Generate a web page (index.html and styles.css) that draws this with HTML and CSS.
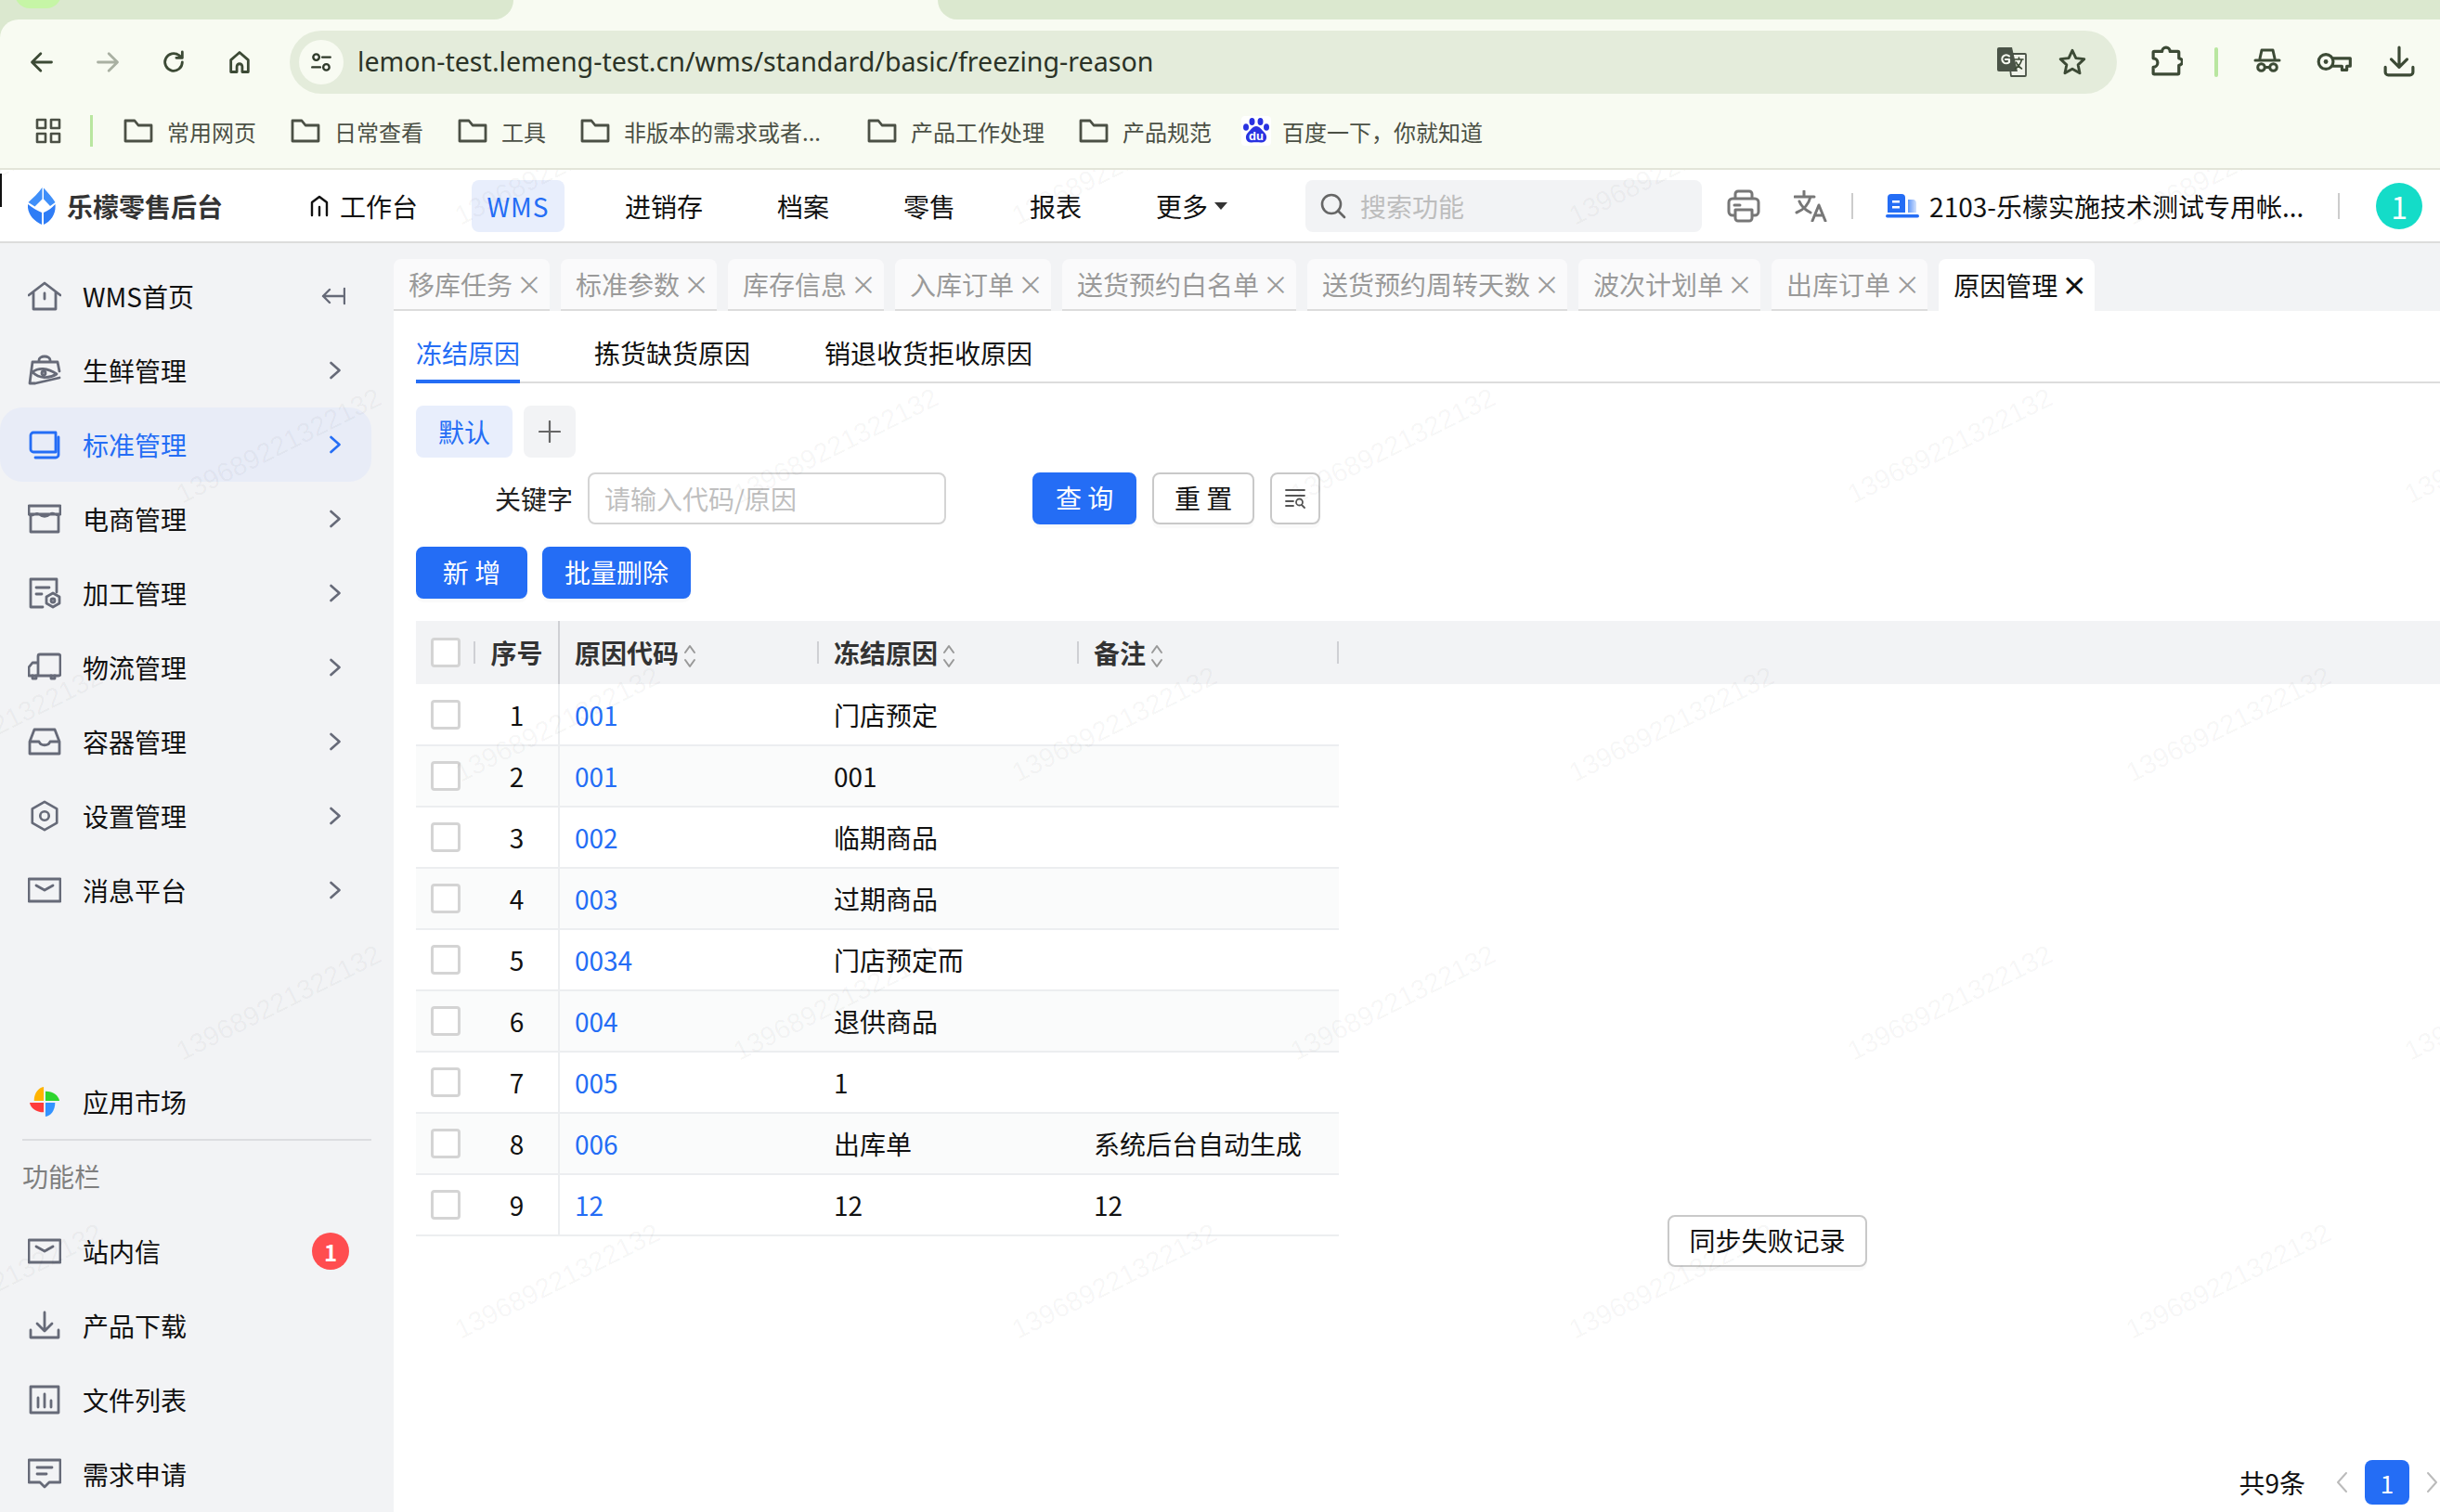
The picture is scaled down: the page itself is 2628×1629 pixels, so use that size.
FILE: index.html
```html
<!DOCTYPE html>
<html lang="zh">
<head>
    <meta charset="UTF-8">
    <title>原因管理</title>
    <link rel="stylesheet" href="styles.css">
</head>
<body>

<!-- 浏览器外壳 -->
<div class="tab-strip">
    <div class="chrome-tab left"><span class="tab-fav"></span></div>
    <div class="chrome-tab right"></div>
</div>
<div class="toolbar-back">
<div class="toolbar">
    <svg class="tb-icon" viewBox="0 0 24 24"><path d="M21 12H4M11 4l-8 8 8 8"/></svg>
    <svg class="tb-icon off" viewBox="0 0 24 24"><path d="M3 12h17M13 4l8 8-8 8"/></svg>
    <svg class="tb-icon" viewBox="0 0 24 24"><path d="M20 12a8 8 0 1 1-3-6.300L20 8M20 2.500V8h-5.500"/></svg>
    <svg class="tb-icon" viewBox="0 0 24 24"><path d="M4 21V10l8-7 8 7v11h-5.500v-5a2.500 2.500 0 0 0-5 0v5z"/></svg>
    <div class="address">
        <span class="site-info">
            <svg viewBox="0 0 24 24"><circle cx="7" cy="7" r="3"/><path d="M13 7h8M3 17h8"/><circle cx="17" cy="17" r="3"/></svg>
        </span>
        <span class="url">lemon-test.lemeng-test.cn/wms/standard/basic/freezing-reason</span>
        <svg class="addr-icon trans" viewBox="0 0 32 32"><path class="white" d="M12 7h18a1 1 0 0 1 1 1v22a1 1 0 0 1-1 1H15z"/><path class="solid" d="M2 0h14l6 26H2a2 2 0 0 1-2-2V2a2 2 0 0 1 2-2z"/><path class="g" d="M13 9.500a4.500 4.500 0 1 0 0 6.500v-3h-4"/><path class="thin" d="M19 13h9M23.500 11v2M26.500 13c-1 5-4 8-7 10M20.500 16c1 3 3.500 5.500 6 7"/></svg>
        <svg class="addr-icon star" viewBox="0 0 24 24"><path d="M12 2.500l2.900 6.200 6.700.8-5 4.600 1.400 6.700L12 17.400l-6 3.400 1.400-6.700-5-4.600 6.700-.8z"/></svg>
    </div>
    <svg class="tb-icon ext" viewBox="0 0 32 32"><path d="M2 7a1 1 0 0 1 1-1h8a4 4 0 0 1 8 0h8a1 1 0 0 1 1 1v6a3.500 3.500 0 0 1 0 7v8a1 1 0 0 1-1 1H3a1 1 0 0 1-1-1v-6a4.500 4.500 0 0 0 0-9z"/></svg>
    <span class="tb-sep"></span>
    <svg class="tb-icon hat" viewBox="0 0 30 26"><path d="M2 13h26M7 11l2-9h12l2 9"/><circle cx="8.500" cy="20.500" r="3.800"/><circle cx="21.500" cy="20.500" r="3.800"/><path d="M12.500 20.500h5"/></svg>
    <svg class="tb-icon key" viewBox="0 0 36 20"><circle cx="9.500" cy="10" r="7.500"/><circle class="dot" cx="9.500" cy="10" r="2.300"/><path d="M17 6.500h17.500v8h-3.500v4h-5v-4h-9"/></svg>
    <svg class="tb-icon dl" viewBox="0 0 32 32"><path d="M16 2v20M8 14l8 8 8-8M2 22v5a3 3 0 0 0 3 3h22a3 3 0 0 0 3-3v-5"/></svg>
</div>
</div>
<div class="bookmarks">
    <svg class="apps" viewBox="0 0 28 28"><path d="M2 2h9v9H2zM17 2h9v9h-9zM2 17h9v9H2zM17 17h9v9h-9z"/></svg>
    <span class="bm-sep"></span>
    <a class="bm"><svg viewBox="0 0 32 28"><path d="M2 25V3h10l4 5h14v17z"/></svg>常用网页</a>
    <a class="bm"><svg viewBox="0 0 32 28"><path d="M2 25V3h10l4 5h14v17z"/></svg>日常查看</a>
    <a class="bm"><svg viewBox="0 0 32 28"><path d="M2 25V3h10l4 5h14v17z"/></svg>工具</a>
    <a class="bm wide"><svg viewBox="0 0 32 28"><path d="M2 25V3h10l4 5h14v17z"/></svg>非版本的需求或者...</a>
    <a class="bm"><svg viewBox="0 0 32 28"><path d="M2 25V3h10l4 5h14v17z"/></svg>产品工作处理</a>
    <a class="bm"><svg viewBox="0 0 32 28"><path d="M2 25V3h10l4 5h14v17z"/></svg>产品规范</a>
    <a class="bm baidu">
        <svg viewBox="0 0 32 32"><rect width="32" height="32" rx="4" fill="#fff" stroke="none"/><g fill="#2932e1" stroke="none"><ellipse cx="5" cy="12" rx="3" ry="3.800"/><ellipse cx="11.500" cy="6" rx="3" ry="4"/><ellipse cx="20.500" cy="6" rx="3" ry="4"/><ellipse cx="27" cy="12" rx="3" ry="3.800"/><path d="M16 11c4 0 6 4 9 7 4 4 2 11-4 10.500-3-.3-7-.3-10 0C5 29 3 22 7 18c3-3 5-7 9-7z"/></g><text x="16" y="26" text-anchor="middle" fill="#fff" stroke="none" font-family="Liberation Sans" font-size="13" font-weight="700">du</text></svg>
        百度一下，你就知道
    </a>
</div>

<!-- 系统顶栏 -->
<div class="navbar">
    <span class="cursor-mark"></span>
    <div class="logo">
        <svg viewBox="10 8 30 40">
            <path fill="#3f8ff9" d="M25.500 8c-4 6-10 11-15 16l7 4.500 8-8zM27 8.500v12l7 7.500 5.500-4c-3.500-6-8.500-11-12.500-15.500z"/>
            <path fill="#2f7df6" d="M10 26c-1 10 6 18 15 22V35c-5-2-10-5-15-9zM39.500 26c1 10-4 18-12.500 22V35c5-2 9-5 12.500-9z"/>
        </svg>
        <span>乐檬零售后台</span>
    </div>
    <a class="nav-item home">
        <svg viewBox="0 0 20 24"><path d="M2 22V8l8-6 8 6v14M10 22v-9"/></svg>工作台
    </a>
    <a class="nav-item on">WMS</a>
    <a class="nav-item">进销存</a>
    <a class="nav-item">档案</a>
    <a class="nav-item">零售</a>
    <a class="nav-item">报表</a>
    <a class="nav-item more">更多<i class="caret"></i></a>
    <div class="nav-search">
        <svg viewBox="0 0 28 28"><circle cx="12" cy="12" r="10"/><path d="M19 19l7 7"/></svg>
        <span>搜索功能</span>
    </div>
    <svg class="nav-icon printer" viewBox="0 0 36 36"><path d="M9 10V5a3 3 0 0 1 3-3h12a3 3 0 0 1 3 3v5M9 28H6a4 4 0 0 1-4-4V14a4 4 0 0 1 4-4h24a4 4 0 0 1 4 4v10a4 4 0 0 1-4 4h-3M9 22h18v9a3 3 0 0 1-3 3H12a3 3 0 0 1-3-3z"/><path d="M8 17h6"/></svg>
    <svg class="nav-icon lang" viewBox="0 0 36 34"><path d="M1 7h21M11 1v6M18 7c-2 8-7 14-15 17M6 12c2 5 6 9 12 12"/><path d="M20 33l7-17 7 17M23 27h8"/></svg>
    <span class="nav-sep"></span>
    <svg class="org-icon" viewBox="0 0 36 27">
        <defs><linearGradient id="org-fade" x1="0" x2="1" y1="0" y2="0"><stop offset="0" stop-color="#5f97f8"/><stop offset="1" stop-color="#d3e2fd"/></linearGradient></defs>
        <path fill="#246df5" d="M2 21V5a4 4 0 0 1 4-4h11a4 4 0 0 1 4 4v16z"/>
        <path fill="url(#org-fade)" d="M24 7h6a4 4 0 0 1 3 4v10h-9z"/>
        <rect fill="#246df5" x="0" y="23" width="36" height="3.500" rx="1.700"/>
        <path fill="#fff" d="M7 8h8v2.500H7zM7 14h8v2.500H7z"/>
    </svg>
    <span class="org-name">2103-乐檬实施技术测试专用帐...</span>
    <span class="nav-sep"></span>
    <span class="avatar">1</span>
</div>

<div class="main">
    <!-- 侧边栏 -->
    <div class="sidebar">
        <a class="side-item">
            <svg viewBox="0 0 36 32"><path d="M1 15L18 2l17 13M6 12v18h24V12M18 13v6"/></svg>
            <span>WMS首页</span>
            <svg class="collapse" viewBox="0 0 26 20"><path d="M25 2v16M23 10H2M9 3l-7 7 7 7"/></svg>
        </a>
        <a class="side-item">
            <svg viewBox="0 0 36 32"><path d="M12 7V5a6 4 0 0 1 12 0v2M5 7h27l2 10M2 30l3-23M2 30h6l26-6M5 18c6-5 16-5 26 2-8 5-19 5-26-2z"/><circle cx="17" cy="19" r="2"/></svg>
            <span>生鲜管理</span>
            <svg class="chev" viewBox="0 0 12 20"><path d="M1.500 2l9 8-9 8"/></svg>
        </a>
        <a class="side-item on">
            <svg viewBox="0 0 36 32"><path d="M6 3h24v21H6a3 3 0 0 1-3-3V6a3 3 0 0 1 3-3zM33 8v19a3 3 0 0 1-3 3H8"/></svg>
            <span>标准管理</span>
            <svg class="chev" viewBox="0 0 12 20"><path d="M1.500 2l9 8-9 8"/></svg>
        </a>
        <a class="side-item">
            <svg viewBox="0 0 36 32"><path d="M1 2h34v9H1zM3 11v19h30V11M1 11c4 4 7-3 11 0s8 3 12 0 7 3 11 0"/></svg>
            <span>电商管理</span>
            <svg class="chev" viewBox="0 0 12 20"><path d="M1.500 2l9 8-9 8"/></svg>
        </a>
        <a class="side-item">
            <svg viewBox="0 0 36 34"><path d="M16 32H3V2h28v14M9 11h14M9 18h6"/><path d="M27 17l7 4v7l-7 4-7-4v-7z"/><circle cx="27" cy="25" r="2"/></svg>
            <span>加工管理</span>
            <svg class="chev" viewBox="0 0 12 20"><path d="M1.500 2l9 8-9 8"/></svg>
        </a>
        <a class="side-item">
            <svg viewBox="0 0 36 30"><path d="M11 24h22a2 2 0 0 0 2-2V3a2 2 0 0 0-2-2H13a2 2 0 0 0-2 2v21zM11 10H5l-4 5v9h10"/><path d="M5 24v3h4v-3M25 24v3h4v-3"/></svg>
            <span>物流管理</span>
            <svg class="chev" viewBox="0 0 12 20"><path d="M1.500 2l9 8-9 8"/></svg>
        </a>
        <a class="side-item">
            <svg viewBox="0 0 36 30"><path d="M2 15L7 2h22l5 13v13H2zM2 15h10c2 5 10 5 12 0h10"/></svg>
            <span>容器管理</span>
            <svg class="chev" viewBox="0 0 12 20"><path d="M1.500 2l9 8-9 8"/></svg>
        </a>
        <a class="side-item">
            <svg viewBox="0 0 36 36"><path d="M18 2l14 8v16l-14 8-14-8V10z"/><circle cx="18" cy="18" r="5"/></svg>
            <span>设置管理</span>
            <svg class="chev" viewBox="0 0 12 20"><path d="M1.500 2l9 8-9 8"/></svg>
        </a>
        <a class="side-item">
            <svg viewBox="0 0 36 30"><path d="M1 3h34v24H1zM9 10l9 5 9-5"/></svg>
            <span>消息平台</span>
            <svg class="chev" viewBox="0 0 12 20"><path d="M1.500 2l9 8-9 8"/></svg>
        </a>

        <a class="side-item market">
            <svg viewBox="0 0 36 36"><path fill="#ffb400" stroke="none" d="M17 17H6c0-9 5-15 11-16z"/><path fill="#2ed52e" stroke="none" d="M19 17V6c9 0 15 5 16 11z"/><path fill="#3393ff" stroke="none" d="M19 19h11c0 9-5 15-11 16z"/><path fill="#ff3b3b" stroke="none" d="M17 19v11C8 30 2 25 1 19z"/></svg>
            <span>应用市场</span>
        </a>
        <div class="side-title">功能栏</div>
        <a class="side-item">
            <svg viewBox="0 0 36 30"><path d="M1 3h34v24H1zM9 10l9 5 9-5"/></svg>
            <span>站内信</span>
            <b class="badge">1</b>
        </a>
        <a class="side-item">
            <svg viewBox="0 0 36 30"><path d="M18 1v19M10 13l8 8 8-8M3 20v8h30v-8"/></svg>
            <span>产品下载</span>
        </a>
        <a class="side-item">
            <svg viewBox="0 0 36 32"><path d="M3 2h30v28H3zM11 14v10M18 10v14M25 17v7"/></svg>
            <span>文件列表</span>
        </a>
        <a class="side-item">
            <svg viewBox="0 0 36 34"><path d="M1 2h34v24H23l-5 5-5-5H1zM10 10h16M10 17h10"/></svg>
            <span>需求申请</span>
        </a>
    </div>

    <!-- 内容区 -->
    <div class="content">
        <div class="page-tabs">
            <a class="page-tab">移库任务<i>×</i></a>
            <a class="page-tab">标准参数<i>×</i></a>
            <a class="page-tab">库存信息<i>×</i></a>
            <a class="page-tab">入库订单<i>×</i></a>
            <a class="page-tab">送货预约白名单<i>×</i></a>
            <a class="page-tab">送货预约周转天数<i>×</i></a>
            <a class="page-tab">波次计划单<i>×</i></a>
            <a class="page-tab">出库订单<i>×</i></a>
            <a class="page-tab on">原因管理<i>×</i></a>
        </div>

        <div class="panel">
            <div class="sub-tabs">
                <a class="sub-tab on">冻结原因</a>
                <a class="sub-tab">拣货缺货原因</a>
                <a class="sub-tab">销退收货拒收原因</a>
            </div>

            <div class="tag-row">
                <span class="tag on">默认</span>
                <span class="tag add"><svg viewBox="0 0 24 24"><path d="M12 1v22M1 12h22"/></svg></span>
            </div>

            <div class="search-row">
                <label>关键字</label>
                <input class="kw" type="text" placeholder="请输入代码/原因">
                <button class="btn primary first">查 询</button>
                <button class="btn">重 置</button>
                <button class="btn icon-btn">
                    <svg viewBox="0 0 24 24"><path d="M2 4h20M2 10h20M2 16h8M2 21h8"/><circle cx="16.500" cy="17" r="3.500"/><path d="M19 20l3 3"/></svg>
                </button>
            </div>

            <div class="action-row">
                <button class="btn primary add-btn">新 增</button>
                <button class="btn primary del-btn">批量删除</button>
            </div>

            <table class="grid">
                <colgroup>
                    <col class="c-check"><col class="c-no"><col class="c-col"><col class="c-col"><col class="c-col"><col>
                </colgroup>
                <thead>
                    <tr>
                        <th class="sep"><span class="cb"></span></th>
                        <th class="fix">序号</th>
                        <th class="sep">原因代码<svg class="sort" viewBox="0 0 14 26"><path d="M2 9l5-7 5 7M2 17l5 7 5-7"/></svg></th>
                        <th class="sep">冻结原因<svg class="sort" viewBox="0 0 14 26"><path d="M2 9l5-7 5 7M2 17l5 7 5-7"/></svg></th>
                        <th class="sep">备注<svg class="sort" viewBox="0 0 14 26"><path d="M2 9l5-7 5 7M2 17l5 7 5-7"/></svg></th>
                        <th></th>
                    </tr>
                </thead>
                <tbody>
                    <tr><td><span class="cb"></span></td><td class="fix num">1</td><td class="code">001</td><td>门店预定</td><td></td><td class="rest"></td></tr>
                    <tr><td><span class="cb"></span></td><td class="fix num">2</td><td class="code">001</td><td>001</td><td></td><td class="rest"></td></tr>
                    <tr><td><span class="cb"></span></td><td class="fix num">3</td><td class="code">002</td><td>临期商品</td><td></td><td class="rest"></td></tr>
                    <tr><td><span class="cb"></span></td><td class="fix num">4</td><td class="code">003</td><td>过期商品</td><td></td><td class="rest"></td></tr>
                    <tr><td><span class="cb"></span></td><td class="fix num">5</td><td class="code">0034</td><td>门店预定而</td><td></td><td class="rest"></td></tr>
                    <tr><td><span class="cb"></span></td><td class="fix num">6</td><td class="code">004</td><td>退供商品</td><td></td><td class="rest"></td></tr>
                    <tr><td><span class="cb"></span></td><td class="fix num">7</td><td class="code">005</td><td>1</td><td></td><td class="rest"></td></tr>
                    <tr><td><span class="cb"></span></td><td class="fix num">8</td><td class="code">006</td><td>出库单</td><td>系统后台自动生成</td><td class="rest"></td></tr>
                    <tr><td><span class="cb"></span></td><td class="fix num">9</td><td class="code">12</td><td>12</td><td>12</td><td class="rest"></td></tr>
                </tbody>
            </table>

            <div class="pager">
                <span class="total">共9条</span>
                <svg class="pg-arrow" viewBox="0 0 14 24"><path d="M12 2L3 12l9 10"/></svg>
                <span class="pg-num">1</span>
                <svg class="pg-arrow" viewBox="0 0 14 24"><path d="M2 2l9 10-9 10"/></svg>
            </div>
        </div>

        <button class="btn float-btn">同步失败记录</button>
    </div>
</div>

<!-- 水印 -->
<div class="wm-layer">
    <div class="wm-row odd"><span>139689221322132</span><span>139689221322132</span><span>139689221322132</span><span>139689221322132</span><span>139689221322132</span></div>
    <div class="wm-row"><span>139689221322132</span><span>139689221322132</span><span>139689221322132</span><span>139689221322132</span><span>139689221322132</span></div>
    <div class="wm-row odd"><span>139689221322132</span><span>139689221322132</span><span>139689221322132</span><span>139689221322132</span><span>139689221322132</span></div>
    <div class="wm-row"><span>139689221322132</span><span>139689221322132</span><span>139689221322132</span><span>139689221322132</span><span>139689221322132</span></div>
    <div class="wm-row odd"><span>139689221322132</span><span>139689221322132</span><span>139689221322132</span><span>139689221322132</span><span>139689221322132</span></div>
</div>

</body>
</html>
```

FILE: styles.css
```css
* { box-sizing: border-box; }
html, body { margin: 0; height: 100%; }
body { width: 2628px; height: 1629px; overflow: hidden; position: relative; background: #fff; font-family: "Noto Sans CJK SC", "Noto Sans", sans-serif; font-size: 28px; color: #111; display: flex; flex-direction: column; }
svg { fill: none; stroke-linecap: round; stroke-linejoin: round; flex: none; }

/* 浏览器外壳 */
.tab-strip { height: 21px; flex: none; display: flex; justify-content: space-between; background: #f8fbf2; }
.chrome-tab { height: 21px; background: #dbe8cf; position: relative; }
.chrome-tab.left { width: 553px; border-radius: 0 0 22px 0; }
.chrome-tab.right { width: 1618px; border-radius: 0 0 0 22px; }
.tab-fav { position: absolute; left: 16px; top: -14px; width: 50px; height: 23px; border-radius: 0 0 16px 16px; background: #c6f5a6; }
.toolbar-back { background: linear-gradient(90deg, #dbe8cf 20px, #f8fbf2 20px); flex: none; }
.toolbar { height: 92px; padding: 12px 0 0 31px; display: flex; align-items: flex-start; background: #f8fbf2; border-radius: 20px 0 0 0; }
.tb-icon { width: 28px; height: 28px; margin: 20px 43px 0 0; stroke: #3c4a35; stroke-width: 2.400; }
.tb-icon.off { stroke: #a9b0a2; }
.address { width: 1968px; height: 68px; margin-left: -3px; border-radius: 34px; background: #e4ecdb; display: flex; align-items: center; padding: 0 10px; }
.site-info { width: 48px; height: 48px; border-radius: 50%; background: #f8fbf2; display: flex; align-items: center; justify-content: center; }
.site-info svg { width: 26px; height: 26px; stroke: #2f3a2a; stroke-width: 2.200; }
.url { margin-left: 15px; padding-bottom: 3px; font-family: "Noto Sans", sans-serif; font-size: 28.600px; color: #2b3327; flex: 1; }
.addr-icon { width: 32px; height: 32px; stroke: #3c4a35; stroke-width: 2.200; }
.trans { margin-right: 33px; }
.trans .solid { fill: #4a5347; stroke: none; }
.trans .white { fill: #f0f3ea; stroke: #4a5347; stroke-width: 1.800; }
.trans .g { stroke: #f4f7ef; stroke-width: 2.200; }
.trans .thin { stroke: #3c4a35; stroke-width: 1.600; }
.star { margin-right: 22px; }
.tb-icon.ext { margin: 16px 0 0 37px; width: 34px; height: 34px; stroke-width: 3; }
.tb-sep { width: 4px; height: 32px; margin: 18px 38px 0 34px; background: #b9e6a0; border-radius: 2px; flex: none; }
.tb-icon.hat { width: 30px; height: 28px; margin: 18px 38px 0 0; stroke-width: 3; }
.tb-icon.hat path:first-child { fill: none; }
.tb-icon.key { width: 38px; height: 21px; margin: 23px 34px 0 0; stroke-width: 3; }
.tb-icon.key .dot { fill: #3c4a35; stroke: none; }
.tb-icon.dl { width: 34px; height: 34px; margin: 16px 0 0 0; stroke-width: 3; }

.bookmarks { height: 70px; flex: none; background: #f8fbf2; border-bottom: 2px solid #e3e5d9; display: flex; align-items: center; padding: 0 0 12px 38px; font-size: 24px; color: #4b5045; }
.apps { width: 28px; height: 28px; stroke: #4b5045; stroke-width: 2.600; }
.bm-sep { width: 3px; height: 34px; margin: 0 33px 0 31px; background: #b9e6a0; flex: none; }
.bm { display: flex; align-items: center; gap: 15px; margin-right: 37px; white-space: nowrap; }
.bm.wide { margin-right: 50px; }
.bm.baidu { margin-right: 0; margin-left: -5px; gap: 12px; }
.bm svg { width: 32px; height: 28px; stroke: #4b5045; stroke-width: 2.800; }
.bm.baidu svg { height: 32px; }

/* 系统顶栏 */
.navbar { height: 79px; flex: none; display: flex; align-items: center; padding-left: 30px; border-bottom: 2px solid #dcdcdc; position: relative; }
.cursor-mark { position: absolute; left: 0; top: 4px; width: 2px; height: 36px; background: #111; }
.logo { display: flex; align-items: center; gap: 12px; font-weight: 700; color: #333; margin-right: 78px; }
.logo svg { width: 30px; height: 40px; }
.nav-item { height: 56px; padding: 0 16px; margin-right: 48px; display: flex; align-items: center; border-radius: 8px; white-space: nowrap; }
.nav-item.on { width: 100px; margin-right: 49px; padding: 0; justify-content: center; letter-spacing: 1px; background: #e8eefc; color: #246df5; }
.nav-item.home { margin-right: 42px; gap: 12px; }
.nav-item.home svg { width: 20px; height: 24px; stroke: #111; stroke-width: 2.400; }
.caret { width: 0; height: 0; margin-left: 7px; border: 7px solid transparent; border-top: 8px solid #333; border-bottom: 0; }
.nav-item.more { margin-right: 68px; }
.nav-search { width: 427px; height: 56px; background: #f2f3f5; border-radius: 8px; display: flex; align-items: center; padding-left: 16px; gap: 15px; color: #bdbdbd; margin-right: 27px; }
.nav-search svg { width: 28px; height: 28px; stroke: #666; stroke-width: 2.600; }
.nav-icon { stroke: #777; stroke-width: 3; }
.printer { width: 36px; height: 36px; margin-right: 36px; }
.lang { width: 36px; height: 34px; margin-right: 26px; }
.nav-sep { width: 2px; height: 28px; background: #ccc; flex: none; }
.org-icon { width: 36px; height: 27px; margin: 0 11px 0 35px; }
.org-name { width: 440px; white-space: nowrap; }
.org-name + .nav-sep { margin-right: 39px; }
.avatar { width: 50px; height: 50px; border-radius: 50%; background: #14dcc8; color: #fff; display: flex; align-items: center; justify-content: center; font-size: 32px; }

/* 主体 */
.main { flex: 1; min-height: 0; display: flex; }
.sidebar { width: 424px; flex: none; background: #f2f3f5; padding-top: 17px; }
.side-item { width: 400px; height: 80px; display: flex; align-items: center; padding-left: 30px; border-radius: 0 24px 24px 0; position: relative; }
.side-item > svg:first-child { width: 36px; height: 34px; stroke: #666a78; stroke-width: 2.800; }
.side-item span { margin-left: 23px; }
.side-item.on { background: #e8ecf7; color: #246df5; border-radius: 24px; }
.side-item.on > svg:first-child { stroke: #246df5; }
.chev { width: 12px; height: 20px; margin-left: auto; margin-right: 33px; stroke: #666a78; stroke-width: 2.600; }
.on .chev { stroke: #246df5; }
.collapse { width: 26px; height: 20px; margin-left: auto; margin-right: 28px; stroke: #666a78; stroke-width: 2.400; }
.market { margin-top: 148px; }
.side-title { width: 376px; margin-left: 24px; height: 81px; padding-bottom: 3px; display: flex; align-items: center; border-top: 2px solid #dcdde0; color: #7f7f7f; }
.badge { width: 40px; height: 40px; margin-left: auto; margin-right: 24px; border-radius: 50%; background: #ff4d4f; color: #fff; display: flex; align-items: center; justify-content: center; font-size: 24px; }

/* 内容区 */
.content { flex: 1; min-width: 0; display: flex; flex-direction: column; position: relative; }
.page-tabs { height: 73px; flex: none; background: #f2f3f5; padding-top: 17px; display: flex; gap: 12px; }
.page-tab { height: 56px; padding: 0 16px; background: #fafafb; border-bottom: 2px solid #dcdcdc; border-radius: 8px 8px 0 0; color: #9a9a9a; display: flex; align-items: center; gap: 4px; white-space: nowrap; }
.page-tab i { font-style: normal; font-size: 28px; width: 20px; text-align: center; }
.page-tab.on { background: #fff; border-bottom: 0; color: #111; }
.page-tab.on i { font-weight: 700; }
.panel { flex: 1; min-height: 0; display: flex; flex-direction: column; padding-left: 24px; }
.sub-tabs { height: 78px; flex: none; display: flex; gap: 80px; border-bottom: 2px solid #dcdcdc; }
.sub-tab { height: 78px; padding-top: 22px; line-height: 46px; white-space: nowrap; }
.sub-tab.on { color: #246df5; border-bottom: 4px solid #246df5; }
.tag-row { display: flex; gap: 12px; margin-top: 24px; height: 56px; flex: none; }
.tag { height: 56px; border-radius: 8px; display: flex; align-items: center; justify-content: center; }
.tag.on { width: 104px; background: #e8eefc; color: #246df5; }
.tag.add { width: 56px; background: #f2f3f5; }
.tag.add svg { width: 24px; height: 24px; stroke: #666; stroke-width: 2.200; }
.search-row { display: flex; align-items: center; margin-top: 16px; height: 56px; flex: none; }
.search-row label { margin-left: 85px; margin-right: 16px; color: #222; }
.kw { width: 386px; height: 56px; border: 2px solid #d4d4d4; border-radius: 8px; padding: 0 16px; font: inherit; outline: none; }
.kw::placeholder { color: #bfbfbf; }
.btn { height: 56px; padding: 0 24px 2px; background: #fff; border: 2px solid #c9c9c9; border-radius: 8px; font: inherit; color: #111; white-space: nowrap; box-shadow: 0 4px 0 rgba(0, 0, 0, 0.02); }
.btn.primary { background: #246df5; border-color: #246df5; color: #fff; }
.search-row .btn { width: 110px; padding: 0 0 2px; margin-right: 17px; }
.search-row .first { width: 112px; margin-left: 93px; }
.search-row .icon-btn { width: 54px; display: flex; align-items: center; justify-content: center; }
.icon-btn svg { width: 24px; height: 24px; stroke: #555; stroke-width: 1.800; }
.action-row { display: flex; gap: 16px; margin-top: 24px; flex: none; }
.action-row .add-btn { width: 120px; padding: 0 0 2px; }
.action-row .del-btn { width: 160px; padding: 0 0 2px; }
.grid { width: 100%; table-layout: fixed; border-collapse: collapse; margin-top: 24px; flex: none; }
.c-check { width: 64px; }
.c-no { width: 90px; }
.c-col { width: 280px; }
.grid th { height: 68px; background: #f2f3f5; text-align: left; padding: 0 0 0 16px; font-weight: 700; color: #333; position: relative; }
.grid th.fix { text-align: center; padding: 0; border-right: 2px solid #cfd0d4; }
.grid th.sep::after { content: ""; position: absolute; right: 0; top: 22px; width: 2px; height: 24px; background: #cfd0d4; }
.grid td { height: 66px; padding: 0 0 0 16px; border-bottom: 2px solid #eceef0; }
.grid td.fix { border-right: 2px solid #eceef0; }
.grid td.num { text-align: center; padding: 0; }
.grid td.rest { border-bottom: 0; background: #fff !important; }
.grid tbody tr:nth-child(even) td { background: #fafbfb; }
.grid .code { color: #246df5; }
.cb { display: block; width: 32px; height: 32px; border: 3px solid #d4d4d4; border-radius: 4px; background: #fff; }
.sort { width: 14px; height: 26px; margin-left: 5px; vertical-align: -5px; stroke: #999; stroke-width: 2; }
.pager { margin-top: auto; margin-bottom: 8px; height: 48px; flex: none; display: flex; align-items: center; justify-content: flex-end; padding-right: 1px; gap: 18px; }
.pg-arrow { width: 14px; height: 24px; stroke: #bbb; stroke-width: 2; }
.pg-num { width: 48px; height: 48px; border-radius: 8px; background: #246df5; color: #fff; display: flex; align-items: center; justify-content: center; font-size: 26px; }
.total { margin-right: 14px; }
.float-btn { position: absolute; left: 1372px; top: 1047px; width: 215px; padding: 0 0 2px; }

/* 水印 */
.wm-layer { position: absolute; left: 0; top: 183px; width: 2628px; height: 1446px; overflow: hidden; pointer-events: none; }
.wm-row { height: 300px; display: flex; }
.wm-row span { width: 600px; flex: none; height: 300px; display: flex; align-items: center; justify-content: center; font-family: "Liberation Sans", sans-serif; font-size: 29px; color: rgba(0, 0, 0, 0.045); transform: rotate(-26.500deg); }
.wm-row.odd { margin-left: -300px; }
.wm-row:first-child { margin-top: -153px; }
```
